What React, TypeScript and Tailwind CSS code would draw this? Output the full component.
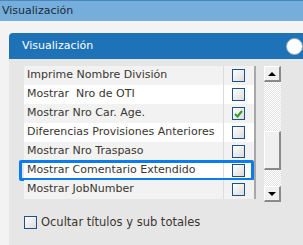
import React from "react";

interface rowProps {
  label: string;
  checked?: boolean;
  selected?: boolean;
  odd: boolean;
}

const CheckBox = ({ checked }: { checked?: boolean }) => (
  <span className="w-[13px] h-[13px] flex-none flex items-center justify-center border border-[#1c5288] bg-gradient-to-br from-[#ffffff] to-[#dcdcdc]">
    {checked && (
      <svg width="9" height="8" viewBox="0 0 9 8">
        <path d="M1 4 L3.5 6.5 L8 1" stroke="#2b9a2b" strokeWidth="2" fill="none" />
      </svg>
    )}
  </span>
);

const ListRow = ({ label, checked, selected, odd }: rowProps) => {
  return (
    <div className={`relative flex h-[19px] ${odd ? "bg-[#f2f2f2]" : "bg-white"}`}>
      <div className="w-[200px] flex items-center pl-[3px] border-r border-[#dcdcdc] text-[11px] text-[#3a3530] whitespace-pre overflow-hidden">
        {label}
      </div>
      <div className="flex-1 flex items-center justify-center pr-[1px]">
        <CheckBox checked={checked} />
      </div>
      {/* fila seleccionada */}
      {selected && (
        <div className="absolute -left-[5px] -top-[1px] -bottom-[1px] right-0 border-[3px] border-[#0a7cf0] rounded-[2px]" />
      )}
    </div>
  );
};

const ScrollButton = ({ up }: { up: boolean }) => (
  <div className="h-[16px] flex items-center justify-center bg-[#f0f0f0] border-t border-l border-t-white border-l-white border-r-2 border-b-2 border-r-[#8a8a8a] border-b-[#8a8a8a]">
    <span
      className={`w-0 h-0 border-l-[4px] border-r-[4px] border-l-transparent border-r-transparent ${
        up ? "border-b-[4px] border-b-black" : "border-t-[4px] border-t-black"
      }`}
    />
  </div>
);

const rows = [
  { label: "Imprime Nombre División" },
  { label: "Mostrar  Nro de OTI" },
  { label: "Mostrar Nro Car. Age.", checked: true },
  { label: "Diferencias Provisiones Anteriores" },
  { label: "Mostrar Nro Traspaso" },
  { label: "Mostrar Comentario Extendido", selected: true },
  { label: "Mostrar JobNumber" },
];

const App = () => {
  return (
    <div className="w-[303px] h-[245px] overflow-hidden bg-[#f3f3f3] flex flex-col font-['DejaVu_Sans',sans-serif]">
      <div className="h-[21px] flex-none bg-[#76aedb] border-t border-[#4a86c0] flex items-center pl-[2px] text-[11px] text-[#1d2a38]">
        Visualización
      </div>

      <div className="flex-1 flex flex-col mt-[12px] ml-[9px] rounded-tl-[4px] overflow-hidden">
        <div className="h-[26px] flex-none bg-[#1e73b8] flex items-center pl-[13px] text-white text-[11px]">
          <span>Visualización</span>
          <span className="ml-auto w-[17px] h-[17px] rounded-full bg-white border border-[#9ab]" />
        </div>

        <div className="flex-1 bg-[#e6e6e6] pt-[7px] pl-[15px]">
          <div className="flex gap-[8px]">
            <div className="w-[232px] h-[133px] border-r-2 border-[#a8a8a8]">
              {rows.map((r, i) => (
                <ListRow key={r.label} label={r.label} checked={r.checked} selected={r.selected} odd={i % 2 === 0} />
              ))}
            </div>

            {/* barra de desplazamiento */}
            <div className="w-[17px] h-[136px] flex flex-col bg-[repeating-conic-gradient(#e4e4e4_0_25%,#ffffff_0_50%)] bg-[length:2px_2px]">
              <ScrollButton up />
              <div className="h-[49px]" />
              <div className="h-[39px] bg-[#f0f0f0] border-t border-l border-t-white border-l-white border-r-2 border-b-2 border-r-[#8a8a8a] border-b-[#8a8a8a]" />
              <div className="flex-1" />
              <ScrollButton up={false} />
            </div>
          </div>

          <label className="flex items-center gap-[4px] mt-[12px] text-[11.5px] text-[#3a3530]">
            <CheckBox />
            <span>Ocultar títulos y sub totales</span>
          </label>
        </div>
      </div>
    </div>
  );
};

export default App;
